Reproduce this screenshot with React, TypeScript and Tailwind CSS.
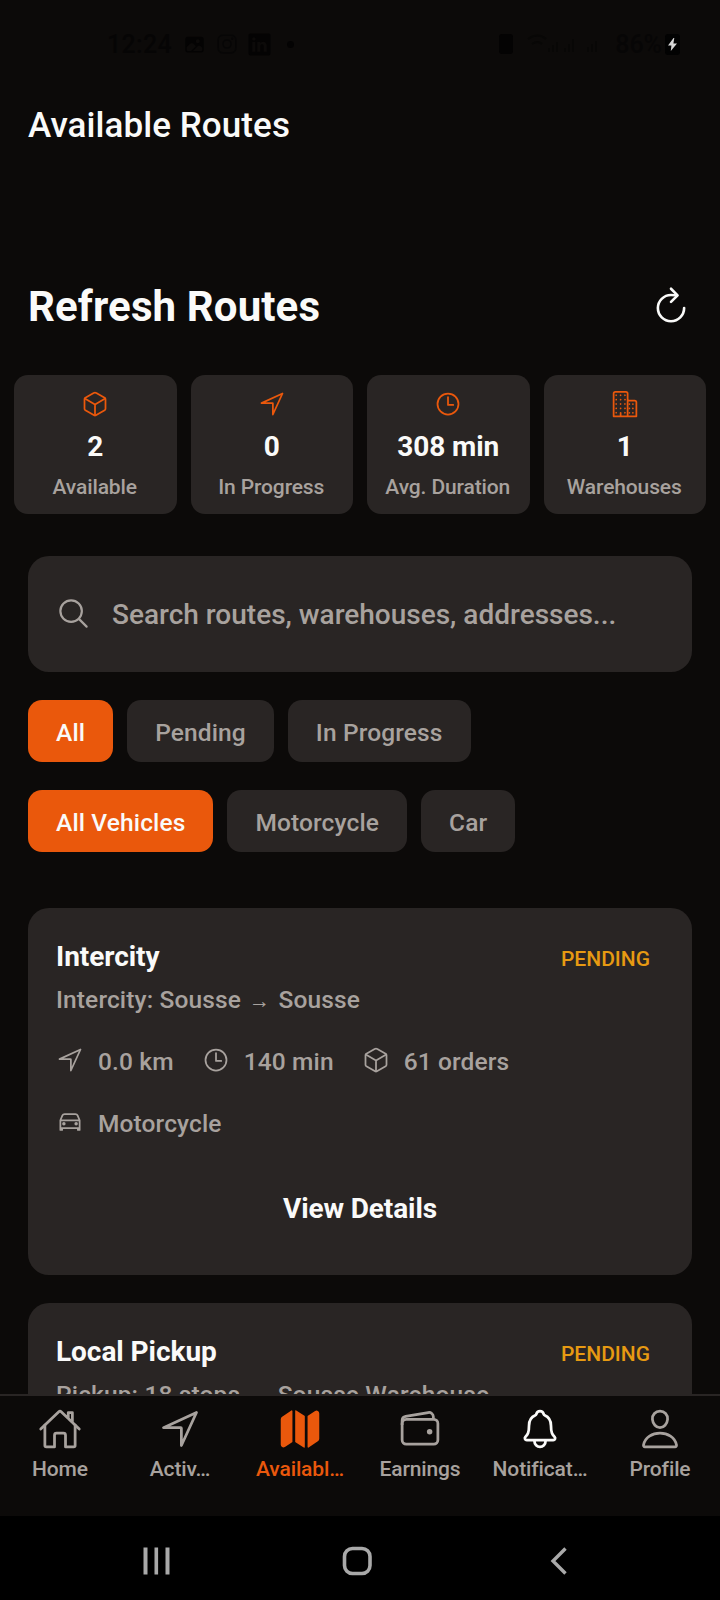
import type { ReactNode } from "react";
import type { IconType } from "react-icons";
import {
  IoBusinessOutline,
  IoCarOutline,
  IoCubeOutline,
  IoHomeOutline,
  IoImage,
  IoLogoInstagram,
  IoLogoLinkedin,
  IoMap,
  IoNavigateOutline,
  IoNotificationsOutline,
  IoPersonOutline,
  IoRefreshOutline,
  IoSearchOutline,
  IoTimeOutline,
  IoWalletOutline,
} from "react-icons/io5";

function StatusBar() {
  return (
    <div className="flex h-[88px] shrink-0 items-center text-[#040303]">
      <span className="ml-[107px] w-[77px] pt-[2px] text-[25px] leading-[30px] font-medium tracking-[0.3px] text-[#060505]">12:24</span>
      <IoImage className="size-[21px]" />
      <IoLogoInstagram className="ml-[11px] size-[22px] text-[#070606]" />
      <IoLogoLinkedin className="ml-[9px] size-[25px]" />
      <span className="ml-[15px] size-[7px] rounded-full bg-current" />
      <span className="ml-auto h-[20px] w-[14px] rounded-[3px] bg-current" />
      <svg viewBox="0 0 80 20" className="ml-[14px] h-5 w-20 text-[#080706]" fill="none" stroke="currentColor" strokeWidth="2">
        <path d="M1 5q10-7 18 0M5 10q6-4 10 0M22 18v-4M26 18v-7M30 18v-10M38 18v-4M42 18v-8M46 18V5M61 18v-5M65 18v-8M69 18v-11" />
      </svg>
      <span className="ml-[8px] pt-[2px] text-[25px] leading-[30px] font-medium text-[#070606]">86%</span>
      <span className="mr-[40px] ml-[3px] flex h-[21px] w-[15px] items-center justify-center rounded-[3px] bg-[#020202]">
        <svg viewBox="0 0 9 13" className="h-[13px] w-[9px]" fill="#d6d6d6">
          <path d="M5.5 0 0 7.4h3.4L2.8 13 9 5.4H5.4L6.3 0z" />
        </svg>
      </span>
    </div>
  );
}

const stats: { icon: IconType; value: string; label: string }[] = [
  { icon: IoCubeOutline, value: "2", label: "Available" },
  { icon: IoNavigateOutline, value: "0", label: "In Progress" },
  { icon: IoTimeOutline, value: "308 min", label: "Avg. Duration" },
  { icon: IoBusinessOutline, value: "1", label: "Warehouses" },
];

function Chips({ items }: { items: string[] }) {
  return (
    <div className="flex gap-[14px] px-[28px]">
      {items.map((item, i) => (
        <button
          key={item}
          className={
            "h-[62px] rounded-[14px] px-[28px] pt-[4px] text-[24.5px] font-medium tracking-[0.13px] whitespace-nowrap " +
            (i === 0 ? "bg-[#ea580c] text-stone-50" : "bg-[#292524] text-[#a8a29e]")
          }
        >
          {item}
        </button>
      ))}
    </div>
  );
}

function Detail({ icon: Icon, children }: { icon: IconType; children: ReactNode }) {
  return (
    <div className="flex h-[34px] items-center">
      <Icon className="size-[28px]" />
      <span className="ml-[14px] pt-[3px] leading-[34px]">{children}</span>
    </div>
  );
}

function RouteCard({ title, from, to, children }: { title: string; from: string; to: string; children?: ReactNode }) {
  return (
    <article className="h-[367px] shrink-0 rounded-[21px] bg-[#292524] px-[28px] pt-[28px] text-[24.5px] font-medium tracking-[0.13px] text-[#a8a29e]">
      <div className="flex items-start justify-between">
        <h3 className="text-[28px] leading-[41px] font-bold tracking-[-0.05px] text-stone-50">{title}</h3>
        <span className="mr-[14px] pt-[3px] text-[21px] leading-[41px] tracking-normal text-[#e79a12]">PENDING</span>
      </div>
      <p className="mt-[2px] flex h-[35px] leading-[35px] whitespace-pre">
        <span>{from} </span>
        <span className="w-[25px] text-center text-[21px] leading-[38px]">→</span>
        <span> {to}</span>
      </p>
      {children}
    </article>
  );
}

const tabs: { icon: IconType; label: string; tone: string; iconTone: string }[] = [
  { icon: IoHomeOutline, label: "Home", tone: "text-[#a8a29e]", iconTone: "" },
  { icon: IoNavigateOutline, label: "Activ…", tone: "text-[#a8a29e]", iconTone: "" },
  { icon: IoMap, label: "Availabl…", tone: "text-[#ea580c]", iconTone: "" },
  { icon: IoWalletOutline, label: "Earnings", tone: "text-[#a8a29e]", iconTone: "" },
  { icon: IoNotificationsOutline, label: "Notificat…", tone: "text-[#a8a29e]", iconTone: "text-stone-50" },
  { icon: IoPersonOutline, label: "Profile", tone: "text-[#a8a29e]", iconTone: "" },
];

export default function App() {
  return (
    <div className="flex h-[1600px] w-[720px] flex-col overflow-hidden bg-[#0c0a09] font-[Roboto,sans-serif] text-stone-50">
      <StatusBar />
      <header className="flex h-[74px] shrink-0 items-center px-[28px] pt-[2px]">
        <h1 className="text-[35px] leading-[42px] font-medium tracking-[0.07px]">Available Routes</h1>
      </header>

      <main className="flex min-h-0 flex-1 flex-col overflow-hidden">
        <div className="mt-[109px] flex h-[70px] shrink-0 items-center justify-between px-[28px]">
          <h2 className="pt-[2px] text-[42px] leading-[50px] font-bold tracking-[0.12px]">Refresh Routes</h2>
          <IoRefreshOutline className="mb-[2px] size-[42px]" />
        </div>

        <section className="mt-[34px] grid shrink-0 grid-cols-4 gap-[14px] px-[14px]">
          {stats.map(({ icon: Icon, value, label }) => (
            <div key={label} className="flex h-[139px] flex-col items-center rounded-[14px] bg-[#292524] pt-[15px]">
              <Icon className="size-[28px] shrink-0 text-[#ea580c]" />
              <div className="mt-[12px] text-[28px] leading-[33px] font-bold tracking-[-0.1px] whitespace-nowrap">{value}</div>
              <div className="mt-[11px] pr-[1px] text-[21px] leading-[26px] font-medium tracking-[-0.12px] whitespace-nowrap text-[#a8a29e]">{label}</div>
            </div>
          ))}
        </section>

        <div className="mx-[28px] mt-[42px] flex h-[116px] shrink-0 items-center rounded-[21px] bg-[#292524] pl-[28px] text-[#a8a29e]">
          <IoSearchOutline className="mb-[1px] size-[35px]" />
          <span className="ml-[21px] pt-[2px] text-[28px] leading-[34px] font-medium">Search routes, warehouses, addresses...</span>
        </div>

        <div className="mt-[28px] flex shrink-0 flex-col gap-[28px]">
          <Chips items={["All", "Pending", "In Progress"]} />
          <Chips items={["All Vehicles", "Motorcycle", "Car"]} />
        </div>

        <div className="mt-[56px] flex flex-col gap-[28px] px-[28px]">
          <RouteCard title="Intercity" from="Intercity: Sousse" to="Sousse">
            <div className="mt-[26px] flex flex-wrap gap-[28px]">
              <Detail icon={IoNavigateOutline}>0.0 km</Detail>
              <Detail icon={IoTimeOutline}>140 min</Detail>
              <Detail icon={IoCubeOutline}>61 orders</Detail>
              <div className="w-full">
                <Detail icon={IoCarOutline}>Motorcycle</Detail>
              </div>
            </div>
            <button className="mt-[50px] block w-full text-[28px] leading-[40px] font-bold tracking-[-0.12px] text-stone-50">View Details</button>
          </RouteCard>
          <RouteCard title="Local Pickup" from="Pickup: 18 stops" to="Sousse Warehouse" />
        </div>
      </main>

      <nav className="grid h-[122px] shrink-0 grid-cols-6 border-t-2 border-[#292524] bg-[#0c0a09] pt-[11px]">
        {tabs.map(({ icon: Icon, label, tone, iconTone }) => (
          <div key={label} className={"flex flex-col items-center " + tone}>
            <Icon className={"size-[44px] " + iconTone} />
            <span className="mt-[5px] text-[21px] leading-[26px] font-medium tracking-[-0.12px] whitespace-nowrap">{label}</span>
          </div>
        ))}
      </nav>

      <footer className="flex h-[84px] shrink-0 items-center bg-black pt-[5px] text-[#a9a9a9]">
        <svg viewBox="0 0 28 28" className="ml-[142px] size-[28px]" fill="currentColor">
          <path d="M1.5 0.5h4v27h-4zM12.5 0.5h3.6v27h-3.6zM23.5 0.5h4v27h-4z" />
        </svg>
        <svg viewBox="0 0 30 30" className="ml-[172px] size-[30px]" fill="none" stroke="currentColor" strokeWidth="3.6">
          <rect x="2.5" y="2.5" width="25.5" height="25" rx="8" />
        </svg>
        <svg viewBox="0 0 18 28" className="ml-[178px] h-[28px] w-[18px]" fill="none" stroke="currentColor" strokeWidth="3.4">
          <path d="M15.5 1.5 3 14l12.5 12.5" />
        </svg>
      </footer>
    </div>
  );
}
